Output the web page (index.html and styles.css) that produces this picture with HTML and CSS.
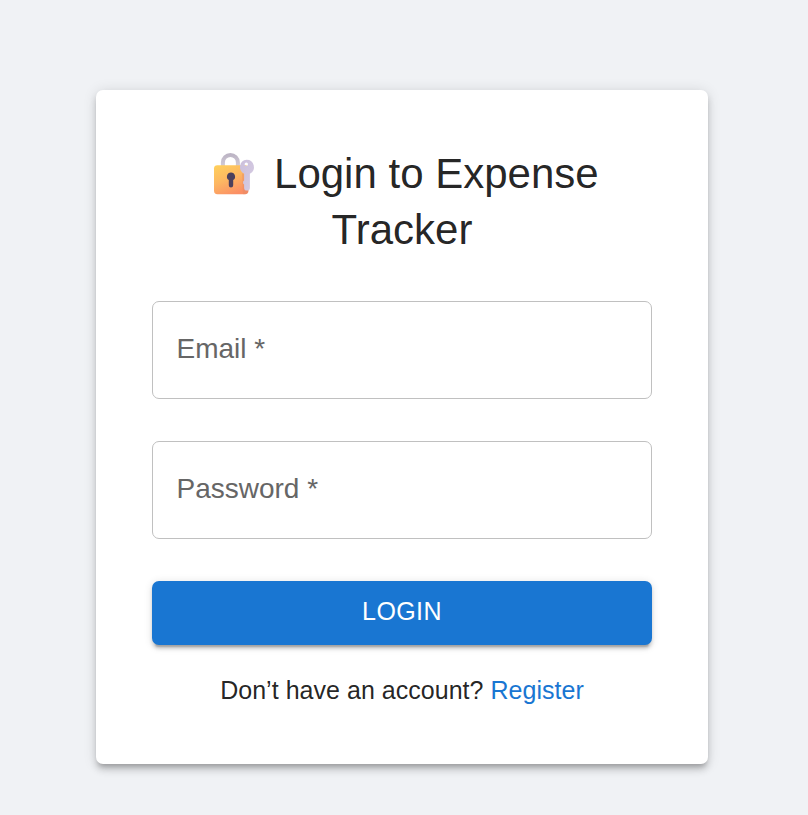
FILE: index.html
```html
<!DOCTYPE html>
<html lang="en">
<head>
<meta charset="utf-8">
<title>Expense Tracker</title>
<link rel="stylesheet" href="styles.css">
</head>
<body>
<main class="card">
  <h1 class="title"><svg class="lock" viewBox="0 0 57 44" aria-hidden="true">
    <defs>
      <linearGradient id="body" x1="0.1" y1="0" x2="0.6" y2="1">
        <stop offset="0" stop-color="#ffcf5c"/>
        <stop offset="0.5" stop-color="#fdb762"/>
        <stop offset="1" stop-color="#fb8f65"/>
      </linearGradient>
      <linearGradient id="shackle" x1="0" y1="0" x2="0" y2="1">
        <stop offset="0" stop-color="#bdb5c5"/>
        <stop offset="1" stop-color="#d3cdd9"/>
      </linearGradient>
      <linearGradient id="key" x1="0" y1="0" x2="1" y2="1">
        <stop offset="0" stop-color="#cbbfdc"/>
        <stop offset="1" stop-color="#d6cce2"/>
      </linearGradient>
    </defs>
    <path d="M17.9 16v-4.6a7.5 7.5 0 0 1 15 0V16" fill="none" stroke="url(#shackle)" stroke-width="4"/>
    <rect x="9" y="14.2" width="34.4" height="29" rx="3.4" fill="url(#body)"/>
    <path d="M37 22.5h6.4v17.3a3.4 3.4 0 0 1-3.4 3.4h-2z" fill="#dc8868" opacity=".35"/>
    <path d="M26 21.4a4.2 4.2 0 0 1 2.2 7.7v5.2a2.2 2.2 0 0 1-4.4 0v-5.2a4.2 4.2 0 0 1 2.2-7.7z" fill="#4b405d"/>
    <path fill-rule="evenodd" d="M41.6 8.8a7.4 7.4 0 0 1 3.3 14v13.9a2.9 2.9 0 0 1-5.8 0v-3.1l-1-1v-2.2l1-1v-6.6a7.4 7.4 0 0 1 2.5-14zm-.3 2.8a1.7 1.7 0 1 0 0 3.4 1.7 1.7 0 0 0 0-3.4z" fill="url(#key)"/>
  </svg> Login to Expense Tracker</h1>
  <form class="form">
    <input class="field" type="email" placeholder="Email *" aria-label="Email" required>
    <input class="field" type="password" placeholder="Password *" aria-label="Password" required>
    <button class="submit" type="submit">LOGIN</button>
  </form>
  <p class="signup">Don’t have an account? <a href="#">Register</a></p>
</main>
</body>
</html>
```
FILE: styles.css
```css
* {
  box-sizing: border-box;
}

body {
  margin: 0;
  min-height: 100vh;
  padding: 90px 100px 51px 96px;
  background: #f0f2f5;
  color: rgba(0, 0, 0, 0.87);
  font-family: "Liberation Sans", Arial, sans-serif;
}

.card {
  height: 674px;
  padding: 56px;
  background: #fff;
  border-radius: 7px;
  box-shadow:
    0 5.25px 5.25px -3.5px rgba(0, 0, 0, 0.2),
    0 5.25px 7px 0 rgba(0, 0, 0, 0.14),
    0 1.75px 14px 0 rgba(0, 0, 0, 0.12);
}

.title {
  margin: 0;
  font-size: 42px;
  font-weight: 400;
  line-height: 56px;
  text-align: center;
}

.lock {
  width: 57px;
  height: 44px;
  vertical-align: -7px;
}

.form {
  display: flex;
  flex-direction: column;
  gap: 42px;
  margin-top: 43px;
}

.field {
  width: 100%;
  height: 98px;
  padding: 0 23.5px 2px;
  border: 1px solid #c0c0c0;
  border-radius: 7px;
  background: transparent;
  color: inherit;
  font: 28px "Liberation Sans", Arial, sans-serif;
}

.field::placeholder {
  color: #666;
  opacity: 1;
}

.submit {
  height: 64px;
  padding: 0 28px 3px;
  border: 0;
  border-radius: 7px;
  background: #1976d2;
  color: #fff;
  font: 25px "Liberation Sans", Arial, sans-serif;
  letter-spacing: 0.4px;
  box-shadow:
    0 5.25px 1.75px -3.5px rgba(0, 0, 0, 0.2),
    0 3.5px 3.5px 0 rgba(0, 0, 0, 0.14),
    0 1.75px 8.75px 0 rgba(0, 0, 0, 0.12);
}

.signup {
  margin: 28px 0 0;
  font-size: 25px;
  line-height: 35px;
  letter-spacing: 0.03px;
  text-align: center;
}

.signup a {
  color: #1976d2;
  text-decoration: none;
}
```
